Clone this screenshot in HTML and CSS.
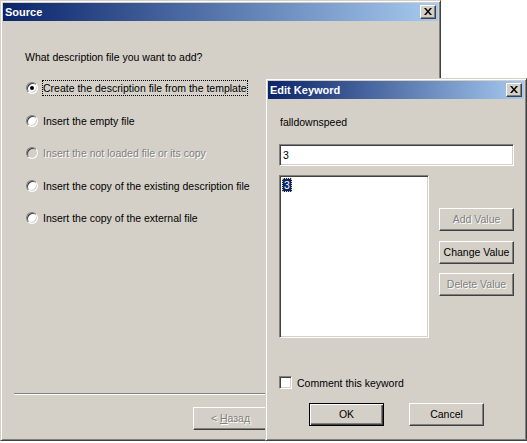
FILE: index.html
```html
<!DOCTYPE html>
<html>
<head>
<meta charset="utf-8">
<link rel="stylesheet" href="styles.css">
</head>
<body>
<div class="win win-source">
  <div class="titlebar">
    <span class="title">Source</span>
    <span class="close"><svg width="8" height="7" viewBox="0 0 8 7"><path d="M0 0h2l2 2.5 2-2.5h2l-3 3.5 3 3.5h-2l-2-2.5-2 2.5h-2l3-3.5z" fill="#000"/></svg></span>
  </div>
  <div class="source-body">
    <p class="question">What description file you want to add?</p>
    <div class="options">
      <div class="opt"><span class="radio checked"></span><span class="lbl focus">Create the description file from the template</span></div>
      <div class="opt"><span class="radio"></span><span class="lbl">Insert the empty file</span></div>
      <div class="opt disabled"><span class="radio"></span><span class="lbl">Insert the not loaded file or its copy</span></div>
      <div class="opt"><span class="radio"></span><span class="lbl">Insert the copy of the existing description file</span></div>
      <div class="opt"><span class="radio"></span><span class="lbl">Insert the copy of the external file</span></div>
    </div>
    <div class="sep"></div>
    <div class="nav"><span class="btn disabled"><span class="btxt">&lt;&nbsp;<u>Н</u>азад</span></span></div>
  </div>
</div>

<div class="win win-edit">
  <div class="titlebar">
    <span class="title">Edit Keyword</span>
    <span class="close"><svg width="8" height="7" viewBox="0 0 8 7"><path d="M0 0h2l2 2.5 2-2.5h2l-3 3.5 3 3.5h-2l-2-2.5-2 2.5h-2l3-3.5z" fill="#000"/></svg></span>
  </div>
  <div class="edit-body">
    <p class="kw">falldownspeed</p>
    <div class="field">3</div>
    <div class="main-row">
      <div class="listbox"><span class="sel">3</span></div>
      <div class="side-btns">
        <span class="btn disabled">Add Value</span>
        <span class="btn">Change Value</span>
        <span class="btn disabled">Delete Value</span>
      </div>
    </div>
    <div class="check-row"><span class="checkbox"></span><span class="lbl">Comment this keyword</span></div>
    <div class="dlg-btns">
      <span class="btn default">OK</span>
      <span class="btn">Cancel</span>
    </div>
  </div>
</div>
</body>
</html>
```
FILE: styles.css
```css
html, body {
  margin: 0;
  padding: 0;
  background: #fff;
  width: 527px;
  height: 443px;
  overflow: hidden;
}
body {
  position: relative;
  font-family: "Liberation Sans", Arial, sans-serif;
  font-size: 10.5px;
  color: #000;
}
.win {
  position: absolute;
  box-sizing: border-box;
  background: #d4d0c8;
  border: 1px solid;
  border-color: #d4d0c8 #404040 #404040 #d4d0c8;
  box-shadow: inset 1px 1px #fff, inset -1px -1px #808080;
  padding: 2px;
  display: flex;
  flex-direction: column;
}
.win-source {
  left: 0;
  top: 0;
  width: 441px;
  height: 441px;
}
.win-edit {
  left: 265px;
  top: 78px;
  width: 262px;
  height: 363px;
}
.titlebar {
  height: 18px;
  flex: none;
  display: flex;
  align-items: center;
  justify-content: space-between;
  padding: 0 2px 0 2px;
  background: linear-gradient(to right, #0a246a, #a6caf0);
}
.title {
  color: #fff;
  font-weight: bold;
  font-size: 11px;
  line-height: 14px;
}
.close {
  width: 16px;
  height: 14px;
  box-sizing: border-box;
  background: #d4d0c8;
  border: 1px solid;
  border-color: #fff #404040 #404040 #fff;
  box-shadow: inset -1px -1px #808080;
  display: flex;
  align-items: center;
  justify-content: center;
  padding: 0 1px 1px 0;
}
.source-body {
  flex: 1;
  display: flex;
  flex-direction: column;
  padding: 0 0 8px 22px;
}
.question {
  margin: 29px 0 0 0;
  line-height: 14px;
}
.options {
  margin: 16px 0 0 1px;
  display: flex;
  flex-direction: column;
  gap: 16.5px;
}
.opt {
  display: flex;
  align-items: center;
  height: 16px;
}
.radio {
  width: 12px;
  height: 12px;
  box-sizing: border-box;
  border-radius: 50%;
  background: #fff;
  border: 1px solid;
  border-color: #808080 #fff #fff #808080;
  box-shadow: inset 1px 1px #404040, inset -1px -1px #d4d0c8;
  display: flex;
  align-items: center;
  justify-content: center;
  flex: none;
}
.radio.checked::after {
  content: "";
  width: 4px;
  height: 4px;
  border-radius: 50%;
  background: #000;
}
.opt .lbl {
  margin-left: 4px;
  line-height: 14px;
  padding: 0;
  border: 1px solid transparent;
}
.opt .lbl.focus {
  border: 1px dotted #000;
}
.opt.disabled .radio {
  background: #d4d0c8;
}
.opt.disabled .lbl,
.btn.disabled {
  color: #808080;
  text-shadow: 1px 1px #fff;
}
.sep {
  margin: auto 0 0 -11px;
  border-top: 1px solid #808080;
  border-bottom: 1px solid #fff;
  height: 0;
}
.nav {
  margin: 12px 0 0 168px;
  display: flex;
}
.btxt u {
  text-decoration-thickness: 1px;
}
.btn {
  box-sizing: border-box;
  width: 75px;
  height: 23px;
  background: #d4d0c8;
  border: 1px solid;
  border-color: #fff #404040 #404040 #fff;
  box-shadow: inset -1px -1px #808080;
  display: flex;
  align-items: center;
  justify-content: center;
  padding-bottom: 1px;
  white-space: nowrap;
}
.btn.default {
  border: 1px solid #000;
  box-shadow: inset 1px 1px #fff, inset -1px -1px #404040, inset -2px -2px #808080;
}
.edit-body {
  flex: 1;
  display: flex;
  flex-direction: column;
  padding: 0 10px 0 11px;
}
.kw {
  margin: 16px 0 0 1px;
  line-height: 14px;
}
.field,
.listbox,
.checkbox {
  box-sizing: border-box;
  background: #fff;
  border: 1px solid;
  border-color: #808080 #fff #fff #808080;
  box-shadow: inset 1px 1px #404040, inset -1px -1px #d4d0c8;
}
.field {
  margin-top: 15px;
  height: 22px;
  padding: 0 3px;
  line-height: 20px;
}
.main-row {
  margin-top: 9px;
  display: flex;
}
.listbox {
  width: 150px;
  height: 163px;
  padding: 2px;
}
.sel {
  display: inline-block;
  box-sizing: border-box;
  width: 10px;
  height: 14px;
  line-height: 12px;
  background: #0a246a;
  color: #fff;
  border: 1px dotted #e6d690;
  text-align: center;
}
.side-btns {
  margin-left: 10px;
  padding-top: 33px;
  display: flex;
  flex-direction: column;
  gap: 9.5px;
}
.check-row {
  margin-top: 38px;
  display: flex;
  align-items: center;
  height: 13px;
}
.checkbox {
  width: 13px;
  height: 13px;
  flex: none;
}
.check-row .lbl {
  margin-left: 5px;
  line-height: 14px;
}
.dlg-btns {
  margin: 14px 0 0 30px;
  display: flex;
  gap: 25px;
}
```
